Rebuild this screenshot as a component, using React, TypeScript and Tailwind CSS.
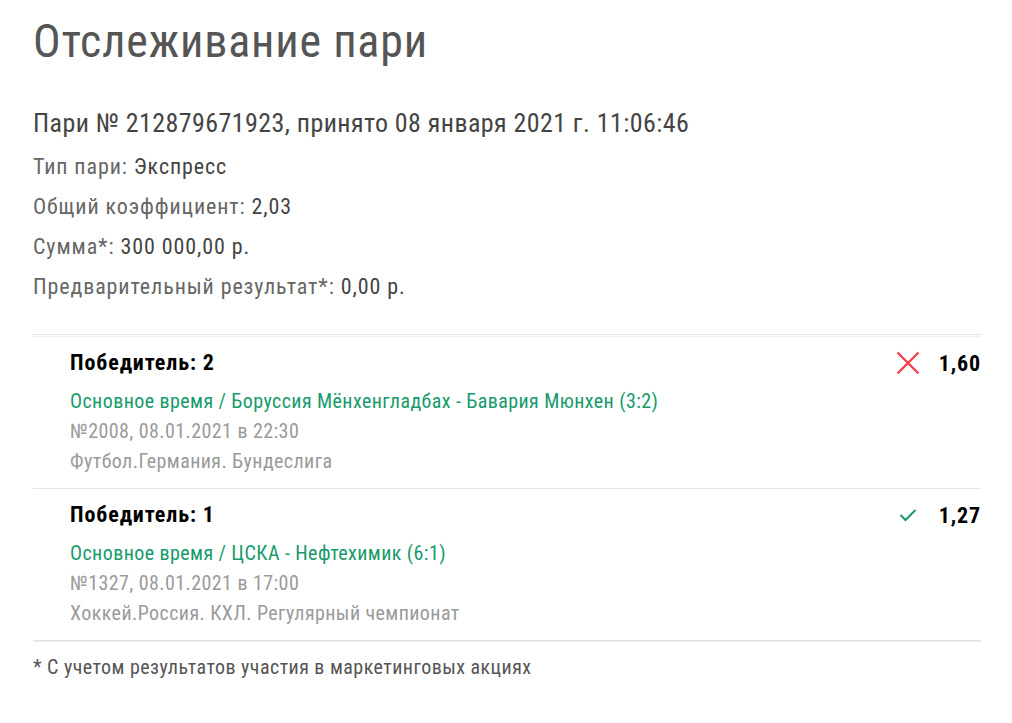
import React from "react";

type Bet = {
  outcome: string;
  event: string;
  meta: string;
  league: string;
  odds: string;
  won: boolean;
};

const bets: Bet[] = [
  {
    outcome: "Победитель: 2",
    event: "Основное время / Боруссия Мёнхенгладбах - Бавария Мюнхен (3:2)",
    meta: "№2008, 08.01.2021 в 22:30",
    league: "Футбол.Германия. Бундеслига",
    odds: "1,60",
    won: false,
  },
  {
    outcome: "Победитель: 1",
    event: "Основное время / ЦСКА - Нефтехимик (6:1)",
    meta: "№1327, 08.01.2021 в 17:00",
    league: "Хоккей.Россия. КХЛ. Регулярный чемпионат",
    odds: "1,27",
    won: true,
  },
];

function LostIcon() {
  return (
    <svg width="24" height="24" viewBox="0 0 24 24" className="shrink-0">
      <path d="M1.5 1.5L22.5 22.5M22.5 1.5L1.5 22.5" stroke="#f4414b" strokeWidth="2.4" fill="none" />
    </svg>
  );
}

function WonIcon() {
  return (
    <svg width="18" height="14" viewBox="0 0 18 14" className="shrink-0">
      <path d="M1.5 7L6.5 12L16.5 2" stroke="#17976a" strokeWidth="2" fill="none" />
    </svg>
  );
}

function BetRow({ bet, last }: { bet: Bet; last: boolean }) {
  return (
    <div className={`flex pl-[37px] pt-[11px] pb-[12px] ${last ? "" : "border-b border-[#e6e6e6]"}`}>
      <div className="flex-1 text-[20px] leading-[30px] tracking-[0.42px]">
        <div className="text-[22px] font-bold tracking-[0.9px] text-black">{bet.outcome}</div>
        <div className="mt-[8px] text-[#179a6c]">{bet.event}</div>
        <div className="text-[#9a9a9a]">{bet.meta}</div>
        <div className="text-[#9a9a9a]">{bet.league}</div>
      </div>
      <div className="flex h-[30px] items-center">
        <div className="flex w-[24px] justify-center">{bet.won ? <WonIcon /> : <LostIcon />}</div>
        <div className="w-[61px] text-right text-[22px] font-bold tracking-[0.9px] text-black">{bet.odds}</div>
      </div>
    </div>
  );
}

export default function App() {
  return (
    <div className="min-h-screen bg-white pl-[33px] pr-[31px] pt-[13px] font-['Roboto',sans-serif] font-stretch-condensed">
      <h1 className="text-[46px] leading-[56px] font-normal tracking-[0.8px] text-[#555555]">
        Отслеживание пари
      </h1>

      <div className="mt-[38px] text-[26px] leading-[32px] tracking-[0.43px] text-[#444444]">
        Пари № 212879671923, принято 08 января 2021 г. 11:06:46
      </div>
      <div className="mt-[8px] text-[22px] leading-[40px] tracking-[0.9px] text-[#666666]">
        <div>Тип пари: <span className="text-[#444444]">Экспресс</span></div>
        <div>Общий коэффициент: <span className="text-[#444444]">2,03</span></div>
        <div>Сумма*: <span className="text-[#444444]">300 000,00 р.</span></div>
        <div>Предварительный результат*: <span className="text-[#444444]">0,00 р.</span></div>
      </div>

      <div className="mt-[27px] border-y border-[#e3e3e3] pt-px">
        <div className="border-t border-[#eeeeee]">
          {bets.map((b, i) => (
            <BetRow key={b.meta} bet={b} last={i === bets.length - 1} />
          ))}
        </div>
      </div>
      <div className="h-px bg-[#eeeeee]" />

      <div className="mt-[12px] text-[20px] leading-[26px] tracking-[0.45px] text-[#555555]">
        * С учетом результатов участия в маркетинговых акциях
      </div>
    </div>
  );
}
